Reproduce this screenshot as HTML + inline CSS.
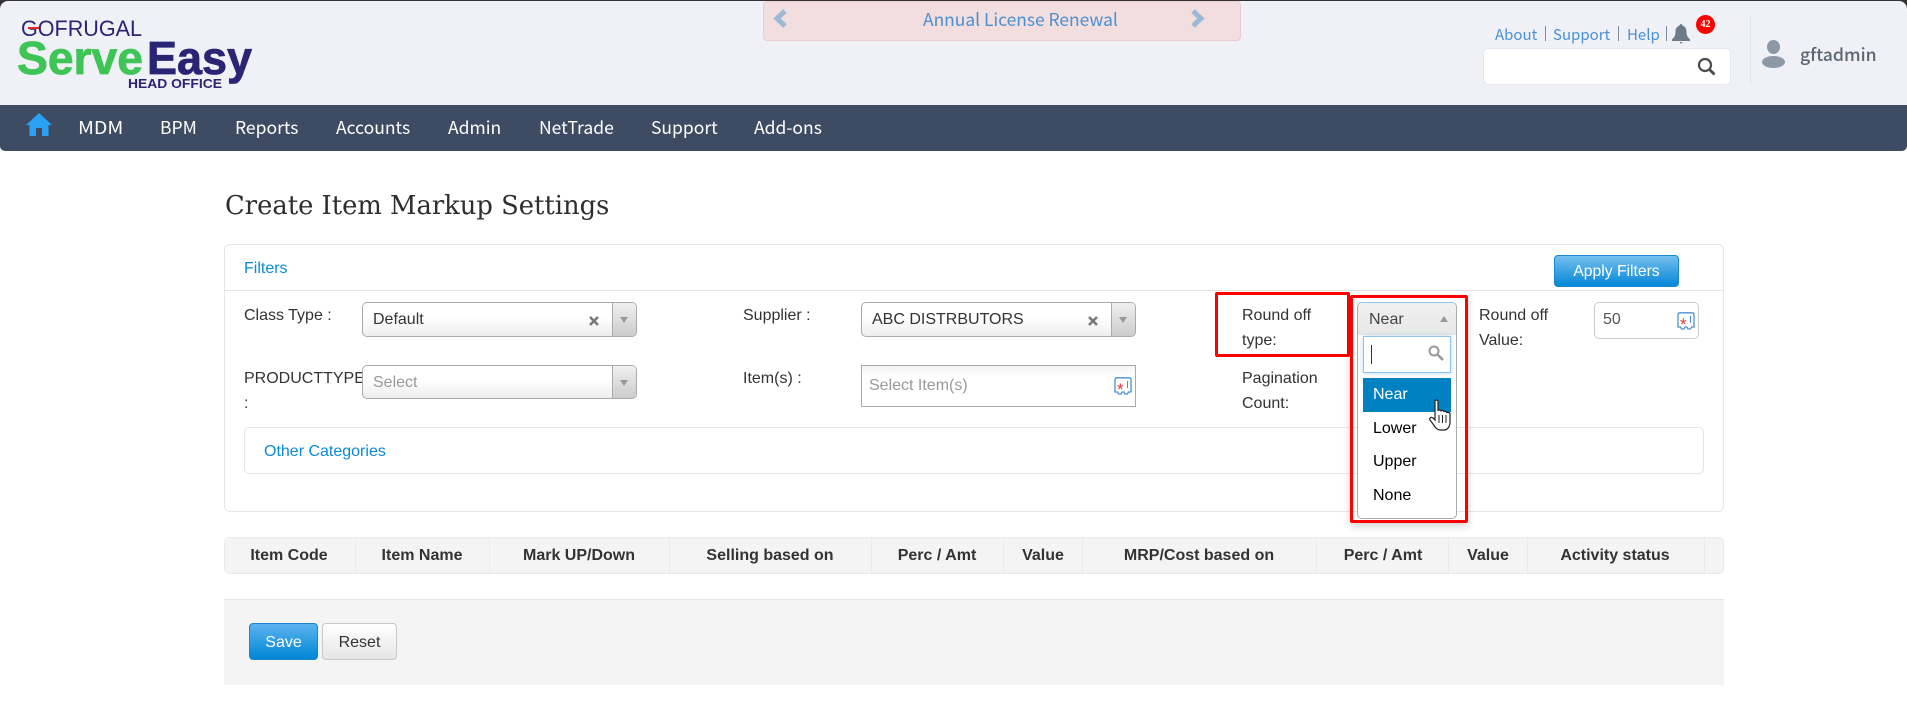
<!DOCTYPE html>
<html><head><meta charset="utf-8"><title>Create Item Markup Settings</title>
<style>
html,body{margin:0;padding:0;background:#fff;width:1907px;height:707px;overflow:hidden}
body{position:relative;font-family:"Liberation Sans",Arial,sans-serif;font-size:16px;color:#333}
.a{position:absolute;white-space:nowrap;line-height:20px}
.b{position:absolute;box-sizing:border-box}
.n{font-family:"Noto Sans CJK SC","Liberation Sans",sans-serif;font-size:17.5px;color:#fff;top:117px;line-height:22px}
.l{font-family:"Noto Sans CJK SC","Liberation Sans",sans-serif;font-size:15px;color:#4a90d2;top:25px}
.sep{position:absolute;width:1px;background:#7d8a99;top:26px;height:15px}
.sel{position:absolute;box-sizing:border-box;height:35px;border:1px solid #aaa;border-radius:5px;background:linear-gradient(#fff 40%,#eee)}
.arr{position:absolute;right:0;top:0;bottom:0;width:23px;border-left:1px solid #aaa;background:linear-gradient(#f0f0f0,#ccc);border-radius:0 4px 4px 0}
.arr:after{content:"";position:absolute;left:7px;top:14px;border:4px solid transparent;border-top:6px solid #999;border-bottom:0}
.v{position:absolute;top:537px;width:1px;height:37px;background:#ebebeb}
.th{position:absolute;top:546px;font-weight:bold;line-height:20px;white-space:nowrap;transform:translateX(-50%)}
.o{position:absolute;left:1373px;color:#000;line-height:20px}
</style></head><body>

<div class="b" style="left:0;top:0;width:1907px;height:40px;background:#333"></div>
<div class="b" style="left:0;top:1px;width:1907px;height:104px;background:#f0f1f7;border-radius:8px 8px 0 0"></div>
<div class="b" style="left:0;top:105px;width:1907px;height:46px;background:#3d4c63;border-radius:0 0 5px 5px"></div>

<svg class="b" style="left:0;top:0" width="270" height="100" viewBox="0 0 270 100">
<text x="21" y="36" font-family="Liberation Sans" font-size="22" fill="#2a2474" textLength="121" lengthAdjust="spacingAndGlyphs">GOFRUGAL</text>
<rect x="28" y="27" width="11" height="2" fill="#e8202a"/>
<text x="17" y="74" font-family="Liberation Sans" font-weight="bold" font-size="46" fill="#3fc456" stroke="#3fc456" stroke-width=".8" textLength="126" lengthAdjust="spacingAndGlyphs">Serve</text>
<text x="147" y="74" font-family="Liberation Sans" font-weight="bold" font-size="46" fill="#2a2474" stroke="#2a2474" stroke-width=".8" textLength="105" lengthAdjust="spacingAndGlyphs">Easy</text>
<text x="128" y="88" font-family="Liberation Sans" font-weight="bold" font-size="13" fill="#2a2474" textLength="94" lengthAdjust="spacingAndGlyphs">HEAD OFFICE</text>
</svg>

<svg class="b" style="left:26px;top:113px" width="26" height="24" viewBox="0 0 26 24"><path d="M13 0L26 12H22.500V23H16V15H10V23H3.500V12H0Z" fill="#2ba1f5"/></svg>
<span class="a n" style="left:78px;transform:scaleX(1.12);transform-origin:0 0">MDM</span>
<span class="a n" style="left:160px">BPM</span>
<span class="a n" style="left:235px">Reports</span>
<span class="a n" style="left:336px">Accounts</span>
<span class="a n" style="left:448px">Admin</span>
<span class="a n" style="left:539px">NetTrade</span>
<span class="a n" style="left:651px">Support</span>
<span class="a n" style="left:754px">Add-ons</span>

<div class="b" style="left:763px;top:1px;width:478px;height:40px;background:#f2dede;border:1px solid #ebccd1;border-radius:4px"></div>
<span class="a" style="left:923px;top:10px;font-family:'Noto Sans CJK SC','Liberation Sans',sans-serif;font-size:17.400px;color:#4a90d2">Annual License Renewal</span>
<svg class="b" style="left:773px;top:9px" width="14" height="19" viewBox="0 0 14 19"><path d="M12 2L4 9.500L12 17" fill="none" stroke="#9db9d8" stroke-width="5"/></svg>
<svg class="b" style="left:1191px;top:9px" width="14" height="19" viewBox="0 0 14 19"><path d="M2 2L10 9.500L2 17" fill="none" stroke="#9db9d8" stroke-width="5"/></svg>

<span class="a l" style="left:1495px">About</span><i class="sep" style="left:1545px"></i>
<span class="a l" style="left:1553px">Support</span><i class="sep" style="left:1618px"></i>
<span class="a l" style="left:1627px">Help</span><i class="sep" style="left:1666px"></i>
<svg class="b" style="left:1672px;top:24px" width="18" height="20" viewBox="0 0 18 20"><path d="M9 0C10 0 10.500 .8 10.500 1.600C13.500 2.500 14.500 5 14.500 8C14.500 12 16 13.500 18 15.500V17H0V15.500C2 13.500 3.500 12 3.500 8C3.500 5 4.500 2.500 7.500 1.600C7.500 .8 8 0 9 0ZM7.500 18H10.500L9 20Z" fill="#6d7a8a"/></svg>
<div class="b" style="left:1696px;top:15px;width:19px;height:19px;border-radius:50%;background:#f00;color:#fff;font:bold 10px/19px 'Liberation Serif',serif;text-align:center">42</div>
<div class="b" style="left:1483px;top:48px;width:248px;height:37px;background:#fff;border:1px solid #e4e6f0;border-radius:5px"></div>
<svg class="b" style="left:1697px;top:57px" width="19" height="19" viewBox="0 0 19 19"><circle cx="8" cy="8" r="6" fill="none" stroke="#4a4a4a" stroke-width="2.200"/><path d="M12.500 12.500L17.500 17.500" stroke="#4a4a4a" stroke-width="2.800"/></svg>
<div class="b" style="left:1750px;top:15px;width:1px;height:70px;background:#e3e4ea"></div>
<svg class="b" style="left:1762px;top:40px" width="23" height="28" viewBox="0 0 23 28"><ellipse cx="11.500" cy="7" rx="6.500" ry="7" fill="#8c98a6"/><ellipse cx="11.500" cy="22" rx="11.500" ry="6" fill="#8c98a6"/></svg>
<span class="a" style="left:1800px;top:43px;font-family:'Noto Sans CJK SC','Liberation Sans',sans-serif;font-size:17.600px;font-weight:500;line-height:24px;color:#5c6670">gftadmin</span>

<span class="a" style="left:225px;top:192px;font-family:'DejaVu Serif',serif;font-size:25.800px;line-height:28px;color:#2e2e2e">Create Item Markup Settings</span>

<div class="b" style="left:224px;top:244px;width:1500px;height:268px;border:1px solid #e5e5e5;border-radius:6px"></div>
<div class="b" style="left:224px;top:290px;width:1500px;height:1px;background:#e5e5e5"></div>
<span class="a" style="left:244px;top:259px;color:#0a8ad6">Filters</span>
<div class="b" style="left:1554px;top:255px;width:125px;height:32px;border-radius:4px;background:linear-gradient(#74bfee,#0687d8);border:1px solid #1a86cc;color:#fff;text-align:center;line-height:32px;font-size:15.700px">Apply Filters</div>

<span class="a" style="left:244px;top:306px">Class Type :</span>
<div class="sel" style="left:362px;top:302px;width:275px"><div class="arr"></div><svg style="position:absolute;left:226px;top:13px" width="10" height="10" viewBox="0 0 10 10"><path d="M1 1L9 9M9 1L1 9" stroke="#777" stroke-width="2.600"/></svg></div>
<span class="a" style="left:373px;top:310px">Default</span>

<span class="a" style="left:244px;top:369px">PRODUCTTYPE</span>
<span class="a" style="left:244px;top:394px">:</span>
<div class="sel" style="left:362px;top:365px;width:275px;height:34px;"><div class="arr"></div></div>
<span class="a" style="left:373px;top:373px;color:#999">Select</span>

<span class="a" style="left:743px;top:306px">Supplier :</span>
<div class="sel" style="left:861px;top:302px;width:275px"><div class="arr"></div><svg style="position:absolute;left:226px;top:13px" width="10" height="10" viewBox="0 0 10 10"><path d="M1 1L9 9M9 1L1 9" stroke="#777" stroke-width="2.600"/></svg></div>
<span class="a" style="left:872px;top:310px">ABC DISTRBUTORS</span>

<span class="a" style="left:743px;top:369px">Item(s) :</span>
<div class="b" style="left:861px;top:365px;width:275px;height:42px;border:1px solid #aaa;background:linear-gradient(#f2f2f2,#fff 25%)"></div>
<span class="a" style="left:869px;top:376px;color:#999">Select Item(s)</span>
<svg class="b" style="left:1114px;top:377px" width="18" height="19" viewBox="0 0 18 19"><path d="M3 .8H15Q17 .8 17 3V15H14.500L13.500 17H11L10 15H8L7 17H4.500L3.500 15H1V3Q1 .8 3 .8Z" fill="#fff" stroke="#4a90d2" stroke-width="1.300"/><text x="3" y="18" font-family="Liberation Sans" font-size="17" fill="#e8303a">*</text><rect x="13" y="4" width="1" height="7" fill="#4a90d2"/></svg>

<span class="a" style="left:1242px;top:306px">Round off</span>
<span class="a" style="left:1242px;top:331px">type:</span>
<span class="a" style="left:1242px;top:369px">Pagination</span>
<span class="a" style="left:1242px;top:394px">Count:</span>

<span class="a" style="left:1479px;top:306px">Round off</span>
<span class="a" style="left:1479px;top:331px">Value:</span>
<div class="b" style="left:1594px;top:302px;width:105px;height:37px;border:1px solid #ccc;border-radius:5px;background:#fff"></div>
<span class="a" style="left:1603px;top:310px;color:#555">50</span>
<svg class="b" style="left:1677px;top:312px" width="18" height="19" viewBox="0 0 18 19"><path d="M3 .8H15Q17 .8 17 3V15H14.500L13.500 17H11L10 15H8L7 17H4.500L3.500 15H1V3Q1 .8 3 .8Z" fill="#fff" stroke="#4a90d2" stroke-width="1.300"/><text x="3" y="18" font-family="Liberation Sans" font-size="17" fill="#e8303a">*</text><rect x="13" y="4" width="1" height="7" fill="#4a90d2"/></svg>

<div class="b" style="left:244px;top:427px;width:1460px;height:47px;border:1px solid #e5e5e5;border-radius:5px"></div>
<span class="a" style="left:264px;top:442px;color:#0a8ad6">Other Categories</span>

<div class="b" style="left:224px;top:537px;width:1500px;height:37px;background:#f4f4f4;border:1px solid #ebebeb;border-radius:5px"></div>
<i class="v" style="left:355px"></i><i class="v" style="left:489px"></i><i class="v" style="left:669px"></i><i class="v" style="left:871px"></i><i class="v" style="left:1003px"></i><i class="v" style="left:1082px"></i><i class="v" style="left:1316px"></i><i class="v" style="left:1448px"></i><i class="v" style="left:1527px"></i><i class="v" style="left:1704px"></i>
<span class="th" style="left:289px">Item Code</span>
<span class="th" style="left:422px">Item Name</span>
<span class="th" style="left:579px">Mark UP/Down</span>
<span class="th" style="left:770px">Selling based on</span>
<span class="th" style="left:937px">Perc / Amt</span>
<span class="th" style="left:1043px">Value</span>
<span class="th" style="left:1199px">MRP/Cost based on</span>
<span class="th" style="left:1383px">Perc / Amt</span>
<span class="th" style="left:1488px">Value</span>
<span class="th" style="left:1615px">Activity status</span>

<div class="b" style="left:224px;top:599px;width:1500px;height:86px;background:#f4f4f4;border-top:1px solid #e5e5e5"></div>
<div class="b" style="left:249px;top:623px;width:69px;height:37px;border-radius:4px;background:linear-gradient(#5cb3ee,#0086d6);border:1px solid #1a86cc;color:#fff;text-align:center;line-height:37px">Save</div>
<div class="b" style="left:322px;top:623px;width:75px;height:37px;border-radius:4px;background:linear-gradient(#fff,#e6e6e6);border:1px solid #c8c8c8;color:#333;text-align:center;line-height:37px">Reset</div>

<div class="b" style="left:1215px;top:292px;width:135px;height:65px;border:3px solid #f00;border-radius:2px"></div>
<div class="b" style="left:1350px;top:295px;width:118px;height:228px;border:3.500px solid #f00;border-radius:2px;box-shadow:0 3px 8px rgba(0,0,0,.18)"></div>
<div class="b" style="left:1357px;top:302px;width:100px;height:217px;background:#fff;border:1px solid #aaa;border-top-color:#8cc4ef;border-radius:5px"></div>
<div class="b" style="left:1358px;top:303px;width:98px;height:32px;background:linear-gradient(#f0f0f0,#e8e8e8);border-radius:5px 5px 0 0"></div>
<span class="a" style="left:1369px;top:310px;color:#444">Near</span>
<div class="b" style="left:1440px;top:316px;border:4px solid transparent;border-bottom:6px solid #999;border-top:0"></div>
<div class="b" style="left:1363px;top:336px;width:88px;height:37px;background:#fff;border:1px solid #8cc4ef;box-shadow:0 0 5px rgba(80,160,230,.4)"></div>
<div class="b" style="left:1371px;top:345px;width:1px;height:19px;background:#333"></div>
<svg class="b" style="left:1428px;top:345px" width="16" height="16" viewBox="0 0 16 16"><circle cx="6" cy="6" r="4.500" fill="none" stroke="#999" stroke-width="2"/><path d="M9.500 9.500L15 15" stroke="#999" stroke-width="2.600"/></svg>
<div class="b" style="left:1363px;top:378px;width:88px;height:34px;background:#0081c2"></div>
<span class="o" style="top:385px;color:#fff">Near</span>
<span class="o" style="top:419px">Lower</span>
<span class="o" style="top:452px">Upper</span>
<span class="o" style="top:486px">None</span>
<svg class="b" style="left:1429px;top:399px" width="23" height="32" viewBox="0 0 23 32"><path d="M6 2.500C6 .5 9 .5 9 2.500V12C9 10.500 12 10.500 12 12.500C12 11 15 11 15 13C15 12 18 12 18 14C18 13 21 13 21 15V23C21 27 19 31 15 31H11C8 31 6 28 4 25L1 21C0 19 2 17.500 4 19L6 21Z" fill="#fff" stroke="#222" stroke-width="1.200"/><path d="M10 16V24M13.500 16V24M17 16V24" stroke="#222" stroke-width="1"/></svg>
</body></html>
